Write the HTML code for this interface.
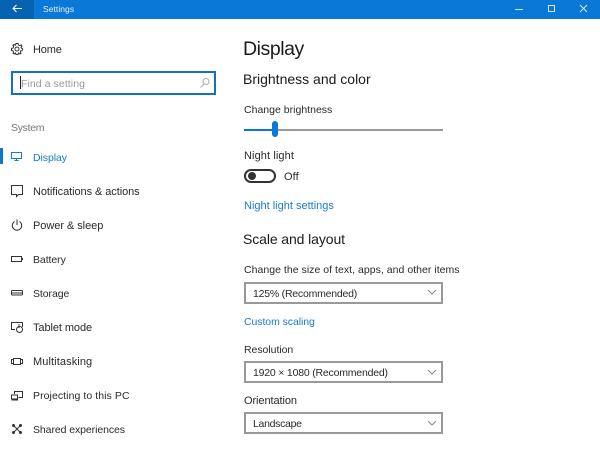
<!DOCTYPE html>
<html><head><meta charset="utf-8">
<style>
html,body{margin:0;padding:0;background:#fff}
#p{position:relative;width:600px;height:449px;overflow:hidden;background:#fff;font-family:"Liberation Sans",sans-serif;color:#2a2a2a}
.t{position:absolute;white-space:nowrap;font-size:11px;line-height:14px;letter-spacing:.1px}
.n{font-size:10.5px}
.l{color:#1a7cc9}
.box{position:absolute;left:244px;width:195px;height:18px;border:2px solid #999;background:#fff}
svg{position:absolute;overflow:visible}
</style></head><body><div id="p">
<div style="position:absolute;left:0;top:0;width:600px;height:19px;background:#0a78d7"></div>
<div style="position:absolute;left:0;top:0;width:34px;height:19px;background:#0563b1"></div>
<svg style="left:12px;top:4px" width="10" height="9" fill="none" stroke="#fff" stroke-width="1"><path d="M1 4.500H10M4.500 1L1 4.500L4.500 8"/></svg>
<div class="t" style="left:43px;top:2px;color:#e4f1fc;font-size:8.500px;letter-spacing:.05px;">Settings</div>
<svg style="left:515px;top:3px" width="72" height="12" fill="none" stroke="#d5e9fa" stroke-width="1"><path d="M0 6.500H8"/><rect x="33.500" y="2.500" width="6" height="6"/><path d="M65 2L72 9M72 2L65 9"/></svg>

<svg style="left:11px;top:43px" width="13" height="13" fill="none" stroke="#333" stroke-width="1"><circle cx="6" cy="6" r="2"/><path d="M5 .5H7L7.500 2L9 2.600L10.300 1.900L11 3.200L10 4.300L10.600 5.300L11.800 6L11 7.800L10 7.800L9.300 9L10 10.300L8.800 11L7.500 10L7 11.500H5L4.500 10L3.200 11L2 10.300L2.700 9L2 7.800L.5 7.500V5.500L2 5L2.700 3.500L1.800 2.300L3 1.500L4.500 2.200Z"/></svg>
<div class="t" style="left:33px;top:43px;letter-spacing:-.15px;">Home</div>

<div style="position:absolute;left:11px;top:71px;width:201px;height:20px;border:2px solid #1272bd;background:#fff"></div>
<div style="position:absolute;left:20px;top:76px;width:1px;height:13px;background:#222"></div>
<div class="t n" style="left:21px;top:77px;color:#999;letter-spacing:.07px;">Find a setting</div>
<svg style="left:200px;top:78px" width="10" height="10" fill="none" stroke="#aaa" stroke-width="1"><circle cx="6" cy="3.500" r="3"/><path d="M4 6L.5 9.500"/></svg>

<div class="t n" style="left:11px;top:121px;color:#777;letter-spacing:-.3px;">System</div>

<div style="position:absolute;left:0;top:148px;width:3px;height:16px;background:#0a78d7"></div>
<svg style="left:11px;top:152px" width="12" height="10" fill="none" stroke="#1a7cc9" stroke-width="1"><rect x=".5" y=".5" width="10" height="6"/><path d="M3.500 8.500H7.500M5.500 7V8"/></svg>
<div class="t l n" style="left:33px;top:151px;letter-spacing:-.07px;">Display</div>

<svg style="left:11px;top:185px" width="13" height="13" fill="none" stroke="#333" stroke-width="1"><path d="M.5 .5H11.500V9.500H7.500L5.500 11.500V9.500H.5Z"/></svg>
<div class="t" style="left:33px;top:185px;letter-spacing:-.07px;">Notifications &amp; actions</div>

<svg style="left:11px;top:219px" width="13" height="13" fill="none" stroke="#333" stroke-width="1"><path d="M3.500 2.500A4.700 4.700 0 1 0 8.500 2.500M6 .5V6"/></svg>
<div class="t" style="left:33px;top:219px;letter-spacing:-.05px;">Power &amp; sleep</div>

<svg style="left:11px;top:256px" width="13" height="8" fill="none" stroke="#333" stroke-width="1"><rect x=".5" y=".5" width="10" height="5"/><path d="M11.500 2V4"/></svg>
<div class="t n" style="left:33px;top:253px;letter-spacing:-.07px;">Battery</div>

<svg style="left:11px;top:290px" width="13" height="7" fill="none" stroke="#333" stroke-width="1"><rect x=".5" y=".5" width="11" height="4.500" rx="1"/><path d="M1 3H11"/></svg>
<div class="t n" style="left:33px;top:287px;letter-spacing:-.07px;">Storage</div>

<svg style="left:11px;top:322px" width="13" height="12" fill="none" stroke="#333" stroke-width="1"><path d="M4 7.500H.5V.5H11.500V5"/><circle cx="8.500" cy="7.500" r="3"/><path d="M8 2V6"/></svg>
<div class="t" style="left:33px;top:321px;letter-spacing:-.08px;">Tablet mode</div>

<svg style="left:11px;top:358px" width="13" height="8" fill="none" stroke="#333" stroke-width="1"><rect x="2.500" y=".5" width="7" height="6"/><path d="M2.500 1.500H.5V5.500H2.500M9.500 1.500H11.500V5.500H9.500"/></svg>
<div class="t" style="left:33px;top:355px;">Multitasking</div>

<svg style="left:11px;top:391px" width="13" height="10" fill="none" stroke="#333" stroke-width="1"><path d="M3.500 3V.5H11.500V6.500H7.500"/><rect x=".5" y="4" width="6" height="4"/><path d="M.5 9H7"/></svg>
<div class="t n" style="left:33px;top:389px;letter-spacing:.07px;">Projecting to this PC</div>

<svg style="left:12px;top:424px" width="11" height="11" fill="none" stroke="#333" stroke-width="1"><path d="M1.500 1.500L8.500 8.500M8.500 1.500L1.500 8.500"/><circle cx="1.500" cy="1.500" r="1" fill="#333"/><circle cx="8.500" cy="1.500" r="1" fill="#333"/><circle cx="1.500" cy="8.500" r="1" fill="#333"/><circle cx="8.500" cy="8.500" r="1" fill="#333"/></svg>
<div class="t n" style="left:33px;top:423px;letter-spacing:-.08px;">Shared experiences</div>

<div class="t" style="left:243px;top:37px;font-size:19.500px;line-height:24px;color:#1a1a1a;letter-spacing:-.45px;">Display</div>
<div class="t" style="left:243px;top:71px;font-size:14px;line-height:17px;color:#1a1a1a;letter-spacing:0;">Brightness and color</div>
<div class="t n" style="left:244px;top:103px;letter-spacing:.01px;">Change brightness</div>
<div style="position:absolute;left:244px;top:129px;width:199px;height:2px;background:#999"></div>
<div style="position:absolute;left:244px;top:129px;width:30px;height:2px;background:#0a78d7"></div>
<div style="position:absolute;left:272px;top:121px;width:6px;height:16px;border-radius:3px;background:#0a78d7"></div>
<div class="t" style="left:244px;top:149px;">Night light</div>
<div style="position:absolute;left:244px;top:169px;width:28px;height:10px;border:2px solid #333;border-radius:8px;background:#fff"></div>
<div style="position:absolute;left:248px;top:172px;width:8px;height:8px;border-radius:50%;background:#333"></div>
<div class="t" style="left:284px;top:170px;">Off</div>
<div class="t l" style="left:244px;top:199px;letter-spacing:0;">Night light settings</div>

<div class="t" style="left:243px;top:231px;font-size:14px;line-height:17px;color:#1a1a1a;letter-spacing:-.1px;">Scale and layout</div>
<div class="t n" style="left:244px;top:263px;letter-spacing:.03px;">Change the size of text, apps, and other items</div>
<div class="box" style="top:282px;"></div>
<div class="t n" style="left:253px;top:287px;letter-spacing:-.22px;">125% (Recommended)</div>
<svg style="left:427px;top:289px" width="11" height="7" fill="none" stroke="#888" stroke-width="1"><path d="M1 1L5 5L9 1"/></svg>
<div class="t l n" style="left:244px;top:315px;letter-spacing:-.07px;">Custom scaling</div>
<div class="t n" style="left:244px;top:343px;letter-spacing:-.04px;">Resolution</div>
<div class="box" style="top:361px;"></div>
<div class="t n" style="left:253px;top:366px;letter-spacing:-.2px;">1920 × 1080 (Recommended)</div>
<svg style="left:427px;top:369px" width="11" height="7" fill="none" stroke="#888" stroke-width="1"><path d="M1 1L5 5L9 1"/></svg>
<div class="t" style="left:244px;top:394px;letter-spacing:-.08px;">Orientation</div>
<div class="box" style="top:412px;"></div>
<div class="t n" style="left:253px;top:417px;letter-spacing:-.3px;">Landscape</div>
<svg style="left:427px;top:420px" width="11" height="7" fill="none" stroke="#888" stroke-width="1"><path d="M1 1L5 5L9 1"/></svg>
</div></body></html>
